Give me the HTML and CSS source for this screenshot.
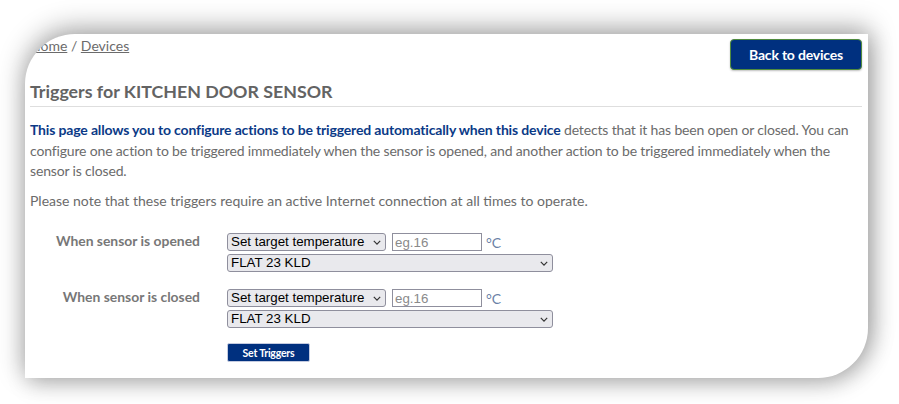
FILE: index.html
```html
<!DOCTYPE html>
<html lang="en">
<head>
<meta charset="utf-8">
<title>Triggers for KITCHEN DOOR SENSOR</title>
<link rel="stylesheet" href="styles.css">
</head>
<body>
<div class="stage">
  <div class="card">
    <div class="topbar">
      <div class="crumbs"><a href="#">Home</a> / <a href="#">Devices</a></div>
      <button class="btn-back" type="button">Back to devices</button>
    </div>
    <h1 class="title">Triggers for KITCHEN DOOR SENSOR</h1>
    <p class="intro"><strong>This page allows you to configure actions to be triggered automatically when this device</strong> detects that it has been open or closed. You can configure one action to be triggered immediately when the sensor is opened, and another action to be triggered immediately when the sensor is closed.</p>
    <p class="note">Please note that these triggers require an active Internet connection at all times to operate.</p>
    <form class="triggers">
      <div class="row">
        <label class="lbl">When sensor is opened</label>
        <div class="ctrls">
          <div class="line">
            <span class="sel sel-action"><select><option>Set target temperature</option></select><svg class="chev" viewBox="0 0 10 6" width="8" height="5"><path d="M1 1l4 4 4-4" fill="none" stroke="#333" stroke-width="1.5"/></svg></span>
            <input class="temp" type="text" placeholder="eg.16">
            <span class="unit">°C</span>
          </div>
          <span class="sel sel-device"><select><option>FLAT 23 KLD</option></select><svg class="chev" viewBox="0 0 10 6" width="8" height="5"><path d="M1 1l4 4 4-4" fill="none" stroke="#333" stroke-width="1.5"/></svg></span>
        </div>
      </div>
      <div class="row">
        <label class="lbl">When sensor is closed</label>
        <div class="ctrls">
          <div class="line">
            <span class="sel sel-action"><select><option>Set target temperature</option></select><svg class="chev" viewBox="0 0 10 6" width="8" height="5"><path d="M1 1l4 4 4-4" fill="none" stroke="#333" stroke-width="1.5"/></svg></span>
            <input class="temp" type="text" placeholder="eg.16">
            <span class="unit">°C</span>
          </div>
          <span class="sel sel-device"><select><option>FLAT 23 KLD</option></select><svg class="chev" viewBox="0 0 10 6" width="8" height="5"><path d="M1 1l4 4 4-4" fill="none" stroke="#333" stroke-width="1.5"/></svg></span>
        </div>
      </div>
      <div class="row">
        <span class="lbl"></span>
        <div class="ctrls"><button class="btn-set" type="button">Set Triggers</button></div>
      </div>
    </form>
  </div>
</div>
</body>
</html>
```
FILE: styles.css
```css
* { box-sizing: border-box; }
html, body { margin: 0; padding: 0; background: #ffffff; }
body { width: 899px; height: 404px; overflow: hidden; font-family: Lato, "Open Sans", sans-serif; }

.stage { padding: 34px 31px 0 25px; }

.card {
  height: 344px;
  background: #ffffff;
  border-radius: 50px 0 50px 0;
  box-shadow: 0 -6px 26px 2px rgba(0, 0, 0, 0.28), 4px 6px 22px rgba(0, 0, 0, 0.22);
  overflow: hidden;
  padding: 3px 6px 0 5px;
}

.topbar { display: flex; justify-content: space-between; align-items: flex-start; }
.crumbs { font-size: 14px; line-height: 18px; color: #6b6b6b; }
.crumbs a { color: #6b6b6b; text-decoration: underline; }

.btn-back {
  margin-top: 2px;
  width: 132px; height: 31px;
  background: #00307f;
  border: 1px solid #4f8a3e;
  border-radius: 4px;
  color: #ffffff;
  font-family: inherit; font-weight: 700; font-size: 14px;
  letter-spacing: -0.2px;
  box-shadow: 0 1px 2px rgba(0,0,0,0.25);
}

.title {
  margin: 10px 0 0 0;
  padding-bottom: 4px;
  border-bottom: 1px solid #dedede;
  font-size: 17.8px; line-height: 22px; font-weight: 700;
  color: #636363;
}

.intro, .note {
  font-size: 14px; line-height: 20.5px; color: #6b6b6b;
  letter-spacing: -0.16px;
  margin: 0;
}
.intro { margin-top: 13px; }
.intro strong { color: #0b3a87; font-weight: 700; }
.note { margin-top: 9px; letter-spacing: 0; }

.triggers { margin-top: 22px; display: flex; flex-direction: column; gap: 17px; }
.row { display: grid; grid-template-columns: 170px auto; column-gap: 27px; align-items: start; }
.row + .row + .row { margin-top: -2px; }
.lbl { text-align: right; font-weight: 700; font-size: 13.9px; line-height: 18px; color: #777777; margin-top: -1px; }
.ctrls { display: flex; flex-direction: column; gap: 3px; align-items: flex-start; }
.line { display: flex; align-items: center; gap: 6px; height: 18px; }

.sel { position: relative; display: inline-block; height: 18px; }
.sel select {
  display: block;
  appearance: none; -webkit-appearance: none;
  height: 18px;
  background: #e9e9ed;
  border: 1px solid #8f8f9d;
  border-radius: 3px;
  font-family: "Liberation Sans", Arial, sans-serif;
  font-size: 13.33px; line-height: 16px;
  color: #000000;
  padding: 0 0 0 3px;
  margin: 0;
}
.sel-action select { width: 159px; }
.sel-device select { width: 326px; }
.chev { position: absolute; right: 5px; top: 7px; }

.temp {
  width: 90px; height: 18px;
  border: 1px solid #8f8f9d;
  border-radius: 0;
  padding: 0 2px;
  margin: 0;
  font-family: "Liberation Sans", Arial, sans-serif;
  font-size: 13.33px;
}
.temp::placeholder { color: #8a8a8a; }
.unit { margin-left: -2px; font-size: 14px; color: #6a7fa6; }

.btn-set {
  width: 83px; height: 19px;
  background: #00307f;
  border: 1px solid #c4cbe0;
  border-radius: 2px;
  color: #ffffff;
  font-family: inherit; font-weight: 700; font-size: 10.5px;
  padding: 0;
  letter-spacing: -0.2px;
}
```
